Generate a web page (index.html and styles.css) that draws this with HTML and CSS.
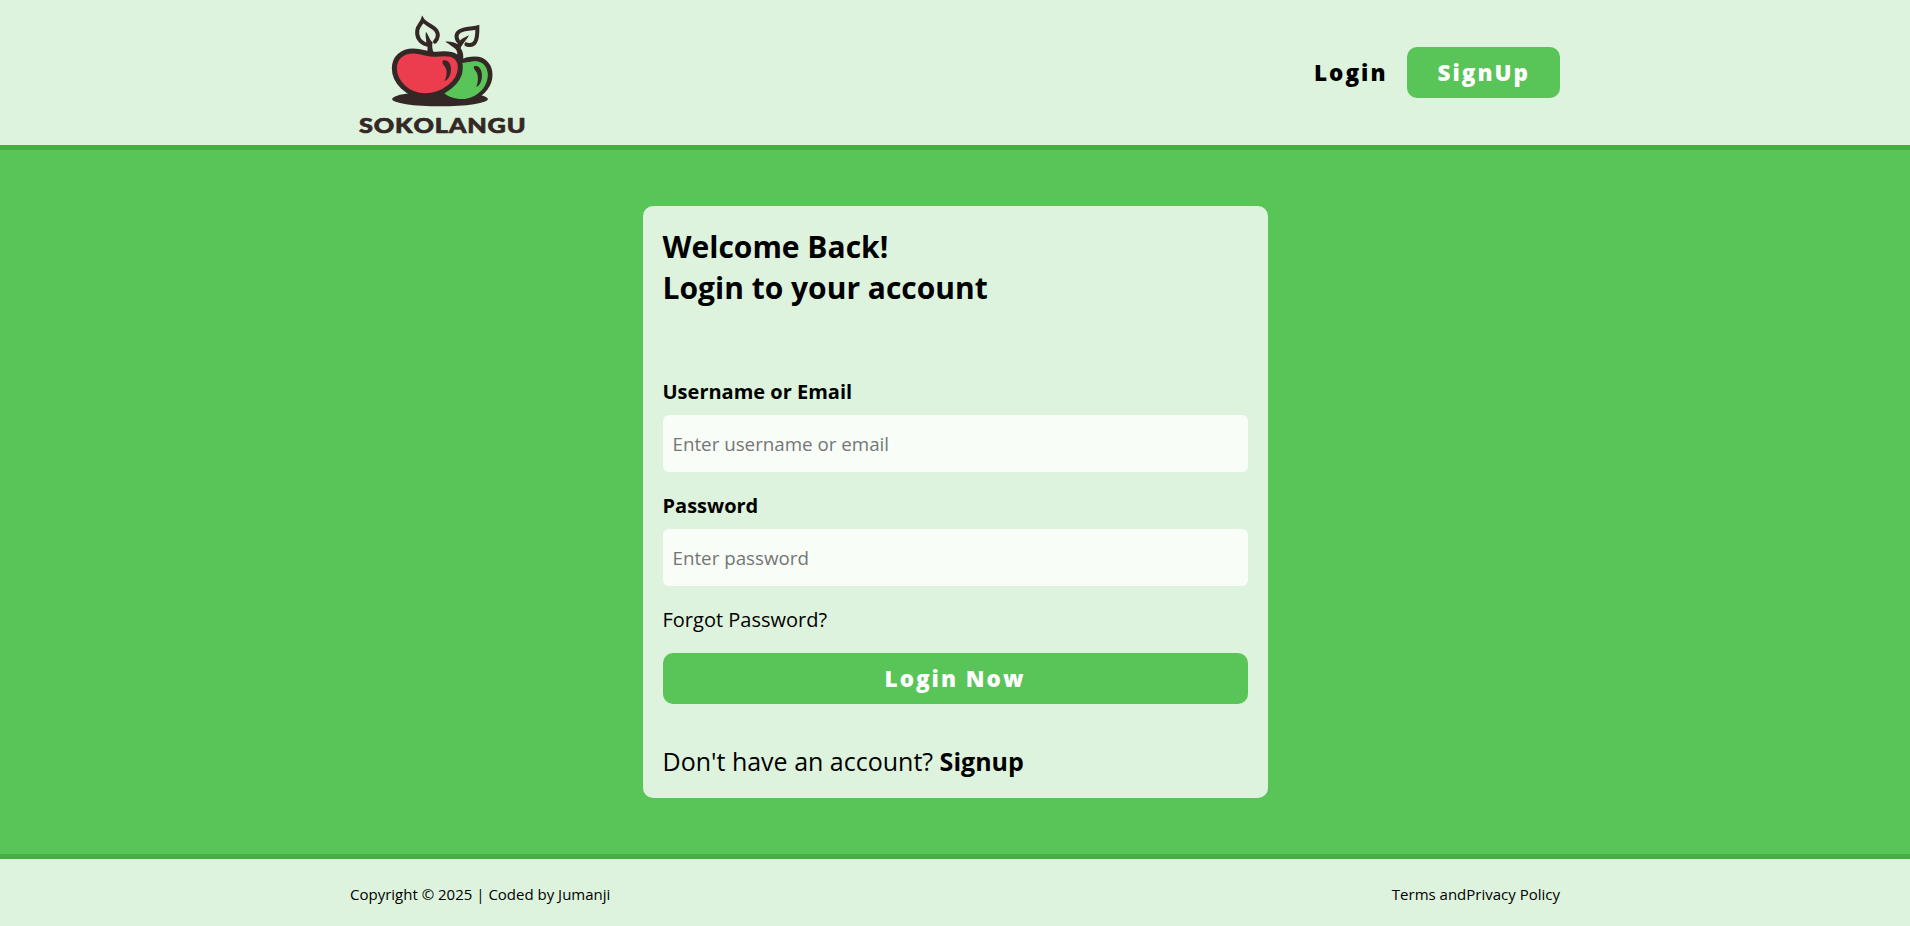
FILE: index.html
```html
<!DOCTYPE html>
<html lang="en">
<head>
<meta charset="utf-8">
<title>Sokolangu | Login</title>
<link rel="stylesheet" href="styles.css">
</head>
<body>
<header class="header">
  <div class="container header-row">
    <a class="logo" aria-label="Sokolangu">
      <svg class="logo-art" viewBox="15 0 540 435">
        <ellipse class="ink" cx="285" cy="297" rx="144" ry="22"/>
        <path class="green" d="M350 186C362 179 376 177 390 177C418 177 435 198 435 224C435 256 412 280 388 290"/>
        <path class="green-fill" d="M345 190L390 184C414 184 428 202 428 225C428 268 388 297 352 297C326 297 309 290 297 279Z"/>
        <path class="red" d="M148 205C148 172 172 153 205 153C232 153 244 163 268 163C290 162 298 159 318 163C338 168 346 183 346 203C346 245 296 287 240 287C187 287 148 245 148 205Z"/>
        <path class="ink" d="M293 182C308 177 318 191 318 208C318 226 309 240 298 244C306 229 307 216 302 204C298 195 290 191 293 182Z"/>
        <path class="ink" d="M387 199C401 193 411 209 411 226C411 244 404 257 394 261C400 244 400 231 396 219C392 211 384 207 387 199Z"/>
        <path class="leaf" d="M246 134C222 128 214 108 217 90C219 78 229 71 233 60C241 72 264 78 274 92C281 103 279 115 270 125"/>
        <path class="ink" d="M243 95C252 107 253 119 263 127C260 137 262 147 266 160L246 158C250 142 247 132 241 137C248 125 239 111 243 95Z"/>
        <path class="leaf" d="M339 123C329 107 336 94 356 89C371 85 384 86 397 82C397 97 398 112 391 125C385 135 375 137 364 133"/>
        <path class="ink" d="M372 106C364 122 350 134 347 145C355 156 356 168 354 183L335 171C342 153 330 144 318 137C312 131 307 129 301 125C315 123 328 127 337 132C342 120 359 112 372 106Z"/>
        <text class="logo-name" x="42" y="400" textLength="502" lengthAdjust="spacingAndGlyphs">SOKOLANGU</text>
      </svg>
    </a>
    <nav class="nav">
      <a class="nav-link">Login</a>
      <a class="btn">SignUp</a>
    </nav>
  </div>
</header>
<main class="main">
  <form class="card">
    <h1 class="title">Welcome Back!<br>Login to your account</h1>
    <label class="label" for="user">Username or Email</label>
    <input class="input" id="user" type="text" placeholder="Enter username or email">
    <label class="label" for="pass">Password</label>
    <input class="input" id="pass" type="password" placeholder="Enter password">
    <a class="forgot">Forgot Password?</a>
    <button class="btn btn-wide" type="button">Login Now</button>
    <p class="switch">Don't have an account? <b>Signup</b></p>
  </form>
</main>
<footer class="footer">
  <div class="container footer-row">
    <p>Copyright © 2025 | Coded by Jumanji</p>
    <p>Terms and<a>Privacy Policy</a></p>
  </div>
</footer>
</body>
</html>
```
FILE: styles.css
```css
* { margin: 0; padding: 0; box-sizing: border-box; }
body {
  min-height: 100vh;
  display: flex;
  flex-direction: column;
  font-family: "Open Sans", sans-serif;
  color: #000;
  background: #ddf3dd;
}
.container { width: 1210px; margin: 0 auto; display: flex; justify-content: space-between; align-items: center; }
.header { height: 150px; border-bottom: 5px solid #43af41; }
.header-row { height: 145px; }
.logo, .logo-art { display: block; width: 180px; height: 145px; }
.ink { fill: #342826; }
.green { fill: #59c457; stroke: #342826; stroke-width: 15; }
.green-fill { fill: #59c457; }
.red { fill: #eb3d4e; stroke: #342826; stroke-width: 15; }
.leaf { fill: none; stroke: #342826; stroke-width: 12; stroke-linecap: round; }
.logo-name { font: 900 63px Lato, sans-serif; font-kerning: none; letter-spacing: 2px; fill: #342826; stroke: #342826; stroke-width: 2; stroke-linejoin: round; }
.nav { display: flex; align-items: center; gap: 20px; }
.nav-link, .btn { font: 800 22.5px/31px "Open Sans", sans-serif; letter-spacing: 2px; }
.btn { display: block; height: 51px; padding: 10px 30px; border: 0; border-radius: 10px; background: #59c457; color: #fff; text-align: center; }
.main { height: 704px; display: flex; justify-content: center; align-items: center; background: #59c457; }
.card { width: 625px; height: 592px; padding: 20px; border-radius: 10px; background: #ddf3dd; display: flex; flex-direction: column; }
.title { font-size: 30px; line-height: 41px; font-weight: 700; margin-bottom: 70px; }
.label { font-size: 20px; line-height: 27px; font-weight: 700; margin-bottom: 10px; }
.input { height: 57px; flex: none; margin-bottom: 20px; padding: 0 10px; border: 0; border-radius: 6px; background: #f8fdf8; font: 18.75px "Open Sans", sans-serif; }
.input::placeholder { color: #757575; }
.forgot { font-size: 20px; line-height: 27px; margin-bottom: 20px; }
.btn-wide { width: 100%; flex: none; }
.switch { margin-top: 40px; font-size: 25px; line-height: 34px; }
.footer { height: 72px; border-top: 5px solid #43af41; }
.footer-row { height: 70px; font-size: 15px; line-height: 20px; }
```
